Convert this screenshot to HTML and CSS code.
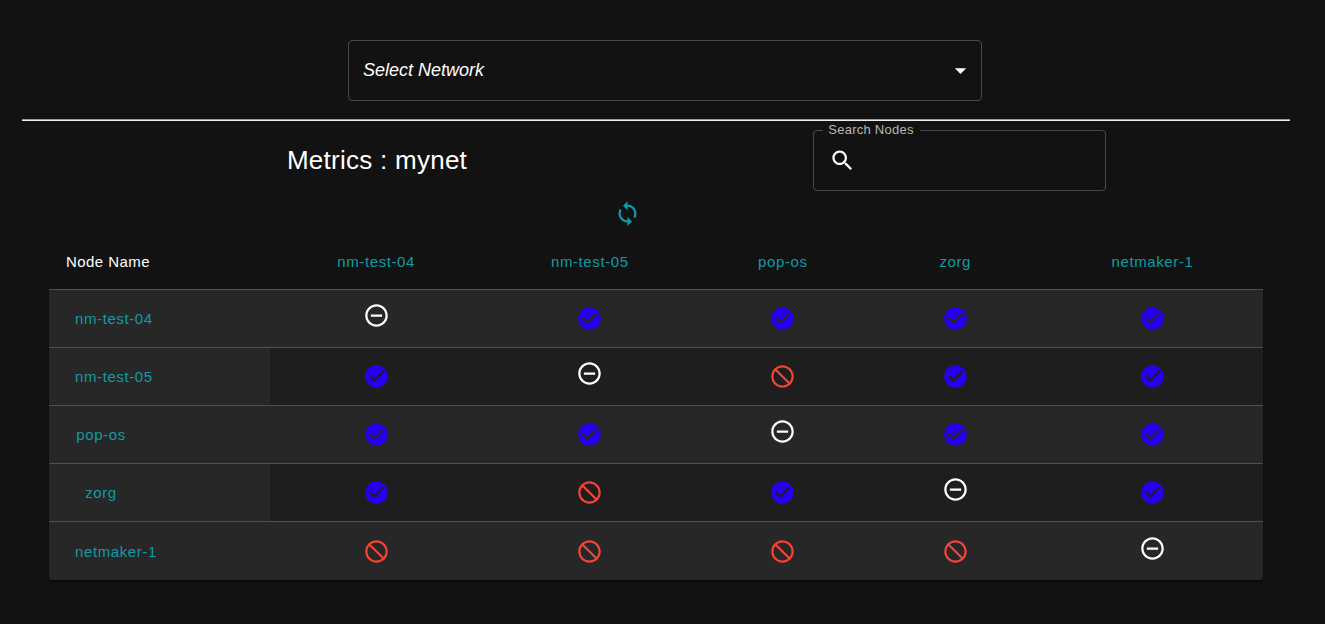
FILE: index.html
```html
<!DOCTYPE html>
<html lang="en">
<head>
<meta charset="utf-8">
<meta name="viewport" content="width=device-width, initial-scale=1">
<title>Metrics : mynet</title>
<link rel="stylesheet" href="styles.css">
</head>
<body>
<svg class="sprite" aria-hidden="true">
  <symbol id="ok" viewBox="0 0 24 24"><path d="M12 2C6.48 2 2 6.48 2 12s4.48 10 10 10 10-4.48 10-10S17.52 2 12 2zm-2 15l-5-5 1.41-1.41L10 14.17l7.59-7.59L19 8l-9 9z"/></symbol>
  <symbol id="self" viewBox="0 0 24 24"><path d="M7 11v2h10v-2H7zm5-9C6.48 2 2 6.48 2 12s4.48 10 10 10 10-4.48 10-10S17.52 2 12 2zm0 18c-4.41 0-8-3.59-8-8s3.59-8 8-8 8 3.59 8 8-3.59 8-8 8z"/></symbol>
  <symbol id="off" viewBox="0 0 24 24"><path d="M12 2C6.48 2 2 6.48 2 12s4.48 10 10 10 10-4.48 10-10S17.52 2 12 2zm0 18c-4.42 0-8-3.58-8-8 0-1.85.63-3.55 1.69-4.9L16.9 18.31C15.55 19.37 13.85 20 12 20zm6.31-3.1L7.1 5.69C8.45 4.63 10.15 4 12 4c4.42 0 8 3.58 8 8 0 1.85-.63 3.55-1.69 4.9z"/></symbol>
</svg>
<main class="page">
  <div class="network">
    <select class="network-select" aria-label="Select Network">
      <option>Select Network</option>
      <option>mynet</option>
    </select>
    <svg class="icon network-arrow" viewBox="0 0 24 24" aria-hidden="true"><path d="M7 10l5 5 5-5z"/></svg>
  </div>
  <hr class="rule">
  <div class="toolbar">
    <h1 class="title">Metrics : mynet</h1>
    <fieldset class="search">
      <legend class="search-legend"><label for="search">Search Nodes</label></legend>
      <div class="search-row">
        <svg class="icon" viewBox="0 0 24 24" aria-hidden="true"><path d="M15.5 14h-.79l-.28-.27C15.41 12.59 16 11.11 16 9.5 16 5.91 13.09 3 9.5 3S3 5.91 3 9.5 5.91 16 9.5 16c1.61 0 3.09-.59 4.23-1.57l.27.28v.79l5 4.99L20.49 19l-4.99-5zm-6 0C7.01 14 5 11.99 5 9.5S7.01 5 9.5 5 14 7.01 14 9.5 11.99 14 9.5 14z"/></svg>
        <input class="search-input" id="search" type="text">
      </div>
    </fieldset>
  </div>
  <div class="refresh">
    <button class="refresh-button" type="button" aria-label="Refresh">
      <svg class="icon" viewBox="0 0 24 24" aria-hidden="true"><path d="M12 4V1L8 5l4 4V6c3.31 0 6 2.69 6 6 0 1.01-.25 1.97-.7 2.8l1.46 1.46C19.54 15.03 20 13.57 20 12c0-4.42-3.58-8-8-8zm0 14c-3.31 0-6-2.69-6-6 0-1.01.25-1.97.7-2.8L5.24 7.74C4.46 8.97 4 10.43 4 12c0 4.42 3.58 8 8 8v3l4-4-4-4v3z"/></svg>
    </button>
  </div>
  <table class="metrics">
    <colgroup>
      <col class="col-name"><col class="col-a"><col class="col-b"><col class="col-c"><col class="col-d"><col class="col-e">
    </colgroup>
    <thead>
      <tr>
        <th class="corner" scope="col">Node Name</th>
        <th scope="col"><a class="node" href="#">nm-test-04</a></th>
        <th scope="col"><a class="node" href="#">nm-test-05</a></th>
        <th scope="col"><a class="node" href="#">pop-os</a></th>
        <th scope="col"><a class="node" href="#">zorg</a></th>
        <th scope="col"><a class="node" href="#">netmaker-1</a></th>
      </tr>
    </thead>
    <tbody>
      <tr>
        <th class="name" scope="row"><a class="node" href="#">nm-test-04</a></th>
        <td class="self"><svg class="icon"><use href="#self"/></svg></td>
        <td class="ok"><svg class="icon"><use href="#ok"/></svg></td>
        <td class="ok"><svg class="icon"><use href="#ok"/></svg></td>
        <td class="ok"><svg class="icon"><use href="#ok"/></svg></td>
        <td class="ok"><svg class="icon"><use href="#ok"/></svg></td>
      </tr>
      <tr>
        <th class="name" scope="row"><a class="node" href="#">nm-test-05</a></th>
        <td class="ok"><svg class="icon"><use href="#ok"/></svg></td>
        <td class="self"><svg class="icon"><use href="#self"/></svg></td>
        <td class="off"><svg class="icon"><use href="#off"/></svg></td>
        <td class="ok"><svg class="icon"><use href="#ok"/></svg></td>
        <td class="ok"><svg class="icon"><use href="#ok"/></svg></td>
      </tr>
      <tr>
        <th class="name" scope="row"><a class="node" href="#">pop-os</a></th>
        <td class="ok"><svg class="icon"><use href="#ok"/></svg></td>
        <td class="ok"><svg class="icon"><use href="#ok"/></svg></td>
        <td class="self"><svg class="icon"><use href="#self"/></svg></td>
        <td class="ok"><svg class="icon"><use href="#ok"/></svg></td>
        <td class="ok"><svg class="icon"><use href="#ok"/></svg></td>
      </tr>
      <tr>
        <th class="name" scope="row"><a class="node" href="#">zorg</a></th>
        <td class="ok"><svg class="icon"><use href="#ok"/></svg></td>
        <td class="off"><svg class="icon"><use href="#off"/></svg></td>
        <td class="ok"><svg class="icon"><use href="#ok"/></svg></td>
        <td class="self"><svg class="icon"><use href="#self"/></svg></td>
        <td class="ok"><svg class="icon"><use href="#ok"/></svg></td>
      </tr>
      <tr>
        <th class="name" scope="row"><a class="node" href="#">netmaker-1</a></th>
        <td class="off"><svg class="icon"><use href="#off"/></svg></td>
        <td class="off"><svg class="icon"><use href="#off"/></svg></td>
        <td class="off"><svg class="icon"><use href="#off"/></svg></td>
        <td class="off"><svg class="icon"><use href="#off"/></svg></td>
        <td class="self"><svg class="icon"><use href="#self"/></svg></td>
      </tr>
    </tbody>
  </table>
</main>
</body>
</html>
```

FILE: styles.css
```css
* {
  box-sizing: border-box;
}

body {
  margin: 0;
  background: #121212;
  color: #fff;
  font-family: "Liberation Sans", Arial, sans-serif;
  font-size: 15px;
}

.sprite {
  display: none;
}

.page {
  padding: 40px 35px 40px 22px;
}

.icon {
  display: block;
  flex: none;
  width: 27px;
  height: 27px;
  fill: currentColor;
}

/* Network picker */
.network {
  display: grid;
  align-items: center;
  width: 50%;
  margin-left: calc(25% + 9px);
}

.network-select {
  grid-area: 1 / 1;
  width: 100%;
  height: 61px;
  padding: 0 40px 2px 14px;
  appearance: none;
  border: 1px solid #494949;
  border-radius: 4px;
  background: transparent;
  color: #fff;
  font: italic 18px "Liberation Sans", Arial, sans-serif;
}

.network-arrow {
  grid-area: 1 / 1;
  justify-self: end;
  margin-right: 8px;
  pointer-events: none;
}

.rule {
  height: 2px;
  margin: 18px 0 2px;
  border: 0;
  border-top: 1px solid #9a9a9a;
  background: #eee;
}

/* Title and search */
.toolbar {
  display: grid;
  grid-template-columns: 560fr 64fr 231fr 145fr;
  align-items: start;
}

.title {
  margin: 21px 0 0;
  font-size: 26px;
  font-weight: 400;
  line-height: 32px;
  letter-spacing: 0.01em;
  text-align: center;
}

.search {
  grid-column: 3;
  min-width: 0;
  margin: 0;
  padding: 0 15px 16px;
  border: 1px solid #494949;
  border-radius: 4px;
}

.search-legend {
  margin-left: -6px;
  padding: 0 6px 0 5px;
  color: #b8b8b8;
  font-size: 13px;
  line-height: 14px;
  letter-spacing: 0.02em;
}

.search-row {
  display: flex;
  align-items: center;
  gap: 9px;
  padding-top: 10px;
}

.search-input {
  flex: 1;
  min-width: 0;
  height: 27px;
  padding: 0;
  border: 0;
  outline: 0;
  background: transparent;
  color: #fff;
  font: inherit;
}

.refresh {
  display: flex;
  justify-content: center;
  padding-right: 58px;
}

.refresh-button {
  padding: 9px 9px 7px;
  border: 0;
  border-radius: 50%;
  background: transparent;
  color: #109ba5;
}

/* Connectivity table */
.metrics {
  width: calc(100% - 54px);
  margin: 0 27px;
  border-collapse: separate;
  border-spacing: 0;
  border-radius: 4px;
  overflow: hidden;
  table-layout: fixed;
  box-shadow: 0 2px 2px #0c0c0c;
}

.col-name { width: 18.2%; }
.col-a { width: 17.5%; }
.col-b { width: 17.7%; }
.col-c { width: 14.1%; }
.col-d { width: 14.3%; }
.col-e { width: 18.2%; }

.metrics th,
.metrics td {
  height: 58px;
  padding: 0 17px;
  border-bottom: 1px solid #515151;
  font-weight: 400;
  text-align: center;
}

.metrics thead th {
  height: 56px;
}

.metrics tbody tr {
  background: #1e1e1e;
}

.metrics tbody tr:nth-child(odd),
.metrics .name {
  background: #272727;
}

.metrics tbody tr:last-child > * {
  border-bottom: 0;
}

.metrics .corner,
.metrics .name {
  text-align: left;
}

.metrics .corner {
  letter-spacing: 0.03em;
}

.metrics td .icon {
  margin: 0 auto;
}

.metrics .self {
  padding-bottom: 6px;
}

.ok {
  color: #2800f0;
}

.off {
  color: #f44336;
}

.node {
  display: inline-block;
  min-width: 70px;
  padding: 0 9px;
  color: #109ba5;
  letter-spacing: 0.04em;
  text-align: center;
  text-decoration: none;
}
```
